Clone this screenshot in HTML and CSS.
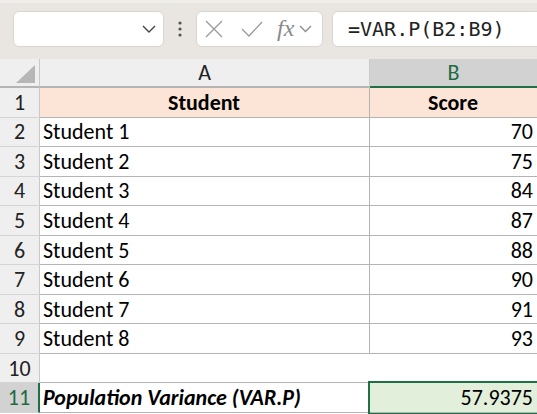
FILE: index.html
```html
<html>
<head>
    <link rel="stylesheet" href="styles.css">
</head>
<body>
<div class="toolbar">
    <div class="namebox">
        <svg class="chev" width="14" height="8" viewBox="0 0 14 8"><path d="M1 1 L7 7 L13 1" fill="none" stroke="#444" stroke-width="1.4"/></svg>
    </div>
    <div class="dots">
        <svg width="4" height="16" viewBox="0 0 4 16"><circle cx="2" cy="2" r="1.6" fill="#555"/><circle cx="2" cy="8" r="1.6" fill="#555"/><circle cx="2" cy="14" r="1.6" fill="#555"/></svg>
    </div>
    <div class="fxbox">
        <svg class="cancel" width="18" height="18" viewBox="0 0 18 18"><path d="M1 1 L17 17 M17 1 L1 17" stroke="#9a9a9a" stroke-width="1.3"/></svg>
        <svg class="enter" width="22" height="16" viewBox="0 0 22 16"><path d="M1 8 L8 15 L21 1" fill="none" stroke="#9a9a9a" stroke-width="1.3"/></svg>
        <span class="fx">fx</span>
        <svg class="chev small" width="13" height="8" viewBox="0 0 13 8"><path d="M1 1 L6.5 6.5 L12 1" fill="none" stroke="#8a8a8a" stroke-width="1.3"/></svg>
    </div>
    <div class="formula">=VAR.P(B2:B9)</div>
</div>

<div class="sheet">
    <div class="corner"><div class="tri"></div></div>
    <div class="colhead">A</div>
    <div class="colhead active">B</div>

    <div class="rh">1</div>
    <div class="c head">Student</div>
    <div class="c head">Score</div>

    <div class="rh">2</div>
    <div class="c">Student 1</div>
    <div class="c num">70</div>

    <div class="rh">3</div>
    <div class="c">Student 2</div>
    <div class="c num">75</div>

    <div class="rh">4</div>
    <div class="c">Student 3</div>
    <div class="c num">84</div>

    <div class="rh">5</div>
    <div class="c">Student 4</div>
    <div class="c num">87</div>

    <div class="rh">6</div>
    <div class="c">Student 5</div>
    <div class="c num">88</div>

    <div class="rh">7</div>
    <div class="c">Student 6</div>
    <div class="c num">90</div>

    <div class="rh">8</div>
    <div class="c">Student 7</div>
    <div class="c num">91</div>

    <div class="rh">9</div>
    <div class="c">Student 8</div>
    <div class="c num">93</div>

    <div class="rh">10</div>
    <div class="c blank"></div>
    <div class="c blank"></div>

    <div class="rh active">11</div>
    <div class="c total">Population Variance (VAR.P)</div>
    <div class="c num selected">57.9375</div>
</div>
</body>
</html>
```

FILE: styles.css
```css
html, body {
    margin: 0;
    background: white;
    overflow: hidden;
    font-family: Carlito, "Liberation Sans", sans-serif;
}

.toolbar {
    height: 59px;
    box-sizing: border-box;
    background: #e9e6e2;
    border-top: 3px solid #efedea;
    padding-top: 8px;
    display: flex;
    align-items: flex-start;
}

.namebox, .fxbox, .formula {
    height: 36px;
    box-sizing: border-box;
    background: white;
    border: 1px solid #d9d6d2;
    border-radius: 6px;
    display: flex;
    align-items: center;
}

.namebox {
    margin-left: 13px;
    width: 151px;
    justify-content: flex-end;
    padding-right: 7px;
}

.dots {
    width: 32px;
    height: 36px;
    display: flex;
    align-items: center;
    justify-content: center;
}

.fxbox {
    width: 127px;
    padding-left: 8px;
}

.cancel {
    margin-right: 18px;
}

.enter {
    margin-right: 14px;
}

.fx {
    font-family: "Liberation Serif", serif;
    font-style: italic;
    font-size: 24px;
    color: #8a8a8a;
    margin-right: 5px;
    margin-top: -2px;
}

.formula {
    flex: 1;
    margin-left: 9px;
    margin-right: -10px;
    padding-left: 15px;
    font-family: "DejaVu Sans Mono", monospace;
    font-size: 20px;
    color: #222;
}

/* grid */
.sheet {
    display: grid;
    grid-template-columns: 40px 330px 168px;
    grid-template-rows: 29px repeat(11, 29.55px);
    font-size: 22px;
    color: black;
}

.sheet > div {
    box-sizing: border-box;
    display: flex;
    align-items: center;
}

.corner {
    background: #efefef;
    border-right: 1px solid #c9c9c9;
    border-bottom: 2px solid #b5b5b5;
    position: relative;
}

.tri {
    position: absolute;
    left: 16px;
    top: 6px;
    width: 0;
    height: 0;
    border-left: 19px solid transparent;
    border-bottom: 18px solid #b7b7b7;
}

.colhead {
    background: #efefef;
    justify-content: center;
    border-right: 1px solid #c9c9c9;
    border-bottom: 2px solid #b5b5b5;
    color: #222;
}

.colhead.active {
    background: #d2d2d2;
    color: #1d6b3f;
    border-bottom: 2px solid #1f7145;
}

.rh {
    background: #efefef;
    justify-content: center;
    border-right: 1px solid #c9c9c9;
    border-bottom: 1px solid #d4d4d4;
    color: #222;
}

.rh.active {
    background: #d2d2d2;
    color: #1d6b3f;
    border-right: 2px solid #1f7145;
}

.c {
    border-right: 1px solid #b4b4b4;
    border-bottom: 1px solid #b4b4b4;
    padding: 0 4px 0 3px;
}

.head {
    background: #fce4d6;
    font-weight: bold;
    justify-content: center;
}

.num {
    justify-content: flex-end;
}

.blank {
    border-right: none;
}

.total {
    font-weight: bold;
    font-style: italic;
}

.selected {
    background: #e2efda;
    outline: 2px solid #1f7145;
    position: relative;
    z-index: 1;
}
```
